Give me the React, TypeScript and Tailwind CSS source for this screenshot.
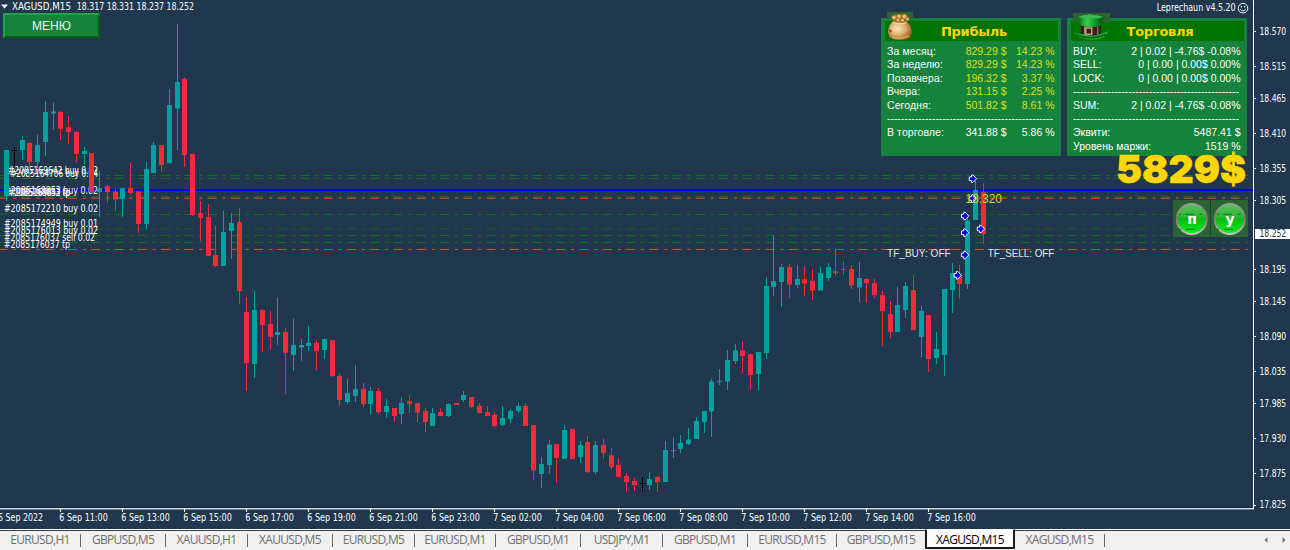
import React from "react";

type Kind = "u" | "d" | "n";
// kind, high, body top, body bottom, low
type Candle = [Kind, number, number, number, number];

const candles: Candle[] = [
  ["u", 150, 150, 196, 201], ["n", 147, 150, 151, 167], ["u", 136.5, 140, 150, 160], ["d", 142, 143, 162, 178],
  ["u", 134.5, 145, 162, 168], ["u", 101, 112, 142, 156], ["u", 102.5, 111.5, 113.5, 130], ["d", 111, 112, 129, 140],
  ["d", 116, 127, 132, 144], ["d", 131, 132, 154, 162], ["u", 147, 151, 154, 165], ["d", 153, 153, 192, 193],
  ["u", 171, 188, 192, 217], ["d", 185, 186, 192, 203], ["d", 189, 191.5, 199.5, 211], ["u", 188, 188, 199, 217],
  ["d", 163, 188, 193, 195], ["d", 191.5, 191.5, 224, 233], ["u", 162, 169, 224, 229], ["u", 142, 145, 173, 173],
  ["d", 145, 145, 165, 172], ["u", 89, 105, 163, 164], ["u", 24, 82, 108.5, 150], ["d", 77, 79, 155, 167],
  ["d", 154, 154, 215, 216], ["d", 201, 213, 218, 241], ["d", 204, 217, 256, 256], ["d", 226, 255, 266, 267],
  ["u", 211, 232, 266, 266], ["u", 213, 223, 231, 259], ["d", 208, 222, 291, 304], ["d", 297, 312, 363, 391],
  ["u", 291, 310, 364, 378], ["d", 309, 310, 325, 352], ["d", 311, 324, 337, 350], ["u", 298, 332, 335, 345],
  ["d", 328, 332, 353, 394], ["u", 318.5, 345, 355, 371], ["u", 339, 345, 347.5, 361], ["u", 326, 343, 346, 351],
  ["d", 340, 343, 351, 370], ["u", 339, 339, 350, 359], ["d", 340, 340, 376, 377], ["d", 374, 376, 400, 406],
  ["u", 379, 393, 402, 404], ["u", 365, 389, 396, 402], ["d", 383, 389, 404, 407], ["u", 387, 391, 404, 414],
  ["d", 388, 391, 412, 414], ["u", 399, 406, 412, 418], ["d", 408, 408, 416, 422], ["u", 397, 403, 414, 424],
  ["d", 395, 401, 404, 413], ["d", 403, 403, 412.5, 422], ["d", 408, 411, 422, 432], ["u", 408, 413, 426, 426],
  ["d", 408.5, 412, 416, 416], ["u", 403, 404, 416, 417], ["d", 403, 403, 405, 405], ["u", 391, 395, 400, 402],
  ["d", 397, 397, 407, 408], ["d", 403, 406, 413, 414], ["d", 406, 412, 416, 416], ["d", 412, 415, 426, 427],
  ["u", 406, 418, 425, 426], ["u", 409, 411, 419, 423], ["u", 403, 406, 411, 413], ["d", 403, 406, 426, 426],
  ["d", 425, 425, 470.5, 480], ["u", 457, 464, 474, 488], ["u", 439.5, 444.5, 465, 474], ["d", 444, 444, 458, 483],
  ["u", 425, 430, 459, 459], ["d", 429, 429, 459, 459], ["u", 441, 445, 457, 463], ["d", 436, 442, 472, 473],
  ["u", 441, 445, 472, 474], ["d", 438.5, 445, 453, 459], ["d", 448, 455, 467, 469], ["d", 458, 465, 477, 477],
  ["d", 473, 476, 482, 492], ["d", 478, 481, 485, 491], ["n", 477, 483, 484, 492], ["u", 472, 479, 485, 490],
  ["d", 476, 477, 482, 492], ["u", 441, 450, 482, 482], ["u", 437.5, 450, 451, 458], ["u", 435, 443, 449, 453],
  ["u", 428, 439.5, 444, 445], ["u", 417, 421, 439, 439], ["u", 411, 411, 422, 433], ["u", 378.5, 381.5, 411.5, 437],
  ["u", 369, 381, 382, 385], ["u", 350, 360, 381.5, 390], ["u", 344, 350.5, 361, 364], ["d", 341, 350.5, 356, 373],
  ["d", 354, 354, 375, 390], ["u", 352, 352, 374, 390], ["u", 277, 286, 353, 359], ["u", 235, 281, 287, 296],
  ["u", 264, 267, 282, 307], ["d", 264, 267, 284.5, 298], ["u", 265, 279, 285, 288], ["d", 266, 279, 283.5, 296],
  ["d", 269, 281, 290.5, 300], ["u", 267, 273, 290.5, 290.5], ["u", 263, 267, 278, 281], ["d", 249, 271, 273, 276],
  ["d", 261, 269, 270, 275], ["d", 265, 269, 285.5, 289], ["u", 262, 278, 287.5, 302], ["d", 278, 279, 283, 303],
  ["d", 279, 283, 295, 298], ["d", 291, 295, 311, 346], ["d", 301, 314, 332, 338.5], ["u", 287, 305, 332, 332],
  ["u", 282, 286, 310, 318], ["d", 275, 290, 330, 330], ["u", 306, 311, 337, 357], ["d", 315, 315, 359, 372],
  ["u", 332, 349, 358, 364], ["u", 289, 289, 355, 376], ["u", 263, 273, 290, 313], ["d", 265, 276, 284, 299],
  ["u", 218, 220.5, 284, 289], ["u", 180, 190, 220, 220], ["d", 183, 192, 234, 244],
];

const fills: Record<Kind, string> = { u: "#02a09f", d: "#f12c3a", n: "#000000" };

const levels: [number, string][] = [
  [175.5, "#087a0c"], [178.5, "#087a0c"], [196.5, "#12661c"], [198.3, "#b9451f"], [214.5, "#087a0c"],
  [229, "#12661c"], [235.5, "#087a0c"], [242.5, "#087a0c"], [249.5, "#e04c12"],
];

const orders: [number, number, string, number][] = [
  [8, 174, "#2085169642 buy 0.02", 90],
  [10, 176.5, "#2085164706 buy 0.04", 88],
  [4, 193.7, "#2085168853 buy 0.02", 94],
  [10, 195.7, "#2085169842 tp", 60],
  [8, 195.7, "#2085168853 tp", 62],
  [4, 212.2, "#2085172210 buy 0.02", 94],
  [4, 226.5, "#2085174949 buy 0.01", 94],
  [4, 233.6, "#2085176013 buy 0.02", 94],
  [4, 240.5, "#2085176037 sell 0.02", 91],
  [4, 247.5, "#2085176037 tp", 66],
];

const prices: [number, string][] = [
  [31.5, "18.570"], [66.5, "18.515"], [98.5, "18.465"], [133.5, "18.410"], [168.5, "18.355"], [200.5, "18.305"],
  [269.5, "18.195"], [301.5, "18.145"], [336.5, "18.090"], [371.5, "18.035"], [403.5, "17.985"], [438.5, "17.930"],
  [473.5, "17.875"], [505, "17.825"],
];

const times = [
  "6 Sep 2022", "6 Sep 11:00", "6 Sep 13:00", "6 Sep 15:00", "6 Sep 17:00", "6 Sep 19:00", "6 Sep 21:00", "6 Sep 23:00",
  "7 Sep 02:00", "7 Sep 04:00", "7 Sep 06:00", "7 Sep 08:00", "7 Sep 10:00", "7 Sep 12:00", "7 Sep 14:00", "7 Sep 16:00",
];

const marks: [number, number][] = [
  [972.5, 178.7], [972.5, 198.5], [964.7, 216], [964.7, 232.7], [964.7, 255], [980.5, 229], [957.3, 275.3],
];

const tahoma = "font-['DejaVu_Sans_Condensed','DejaVu_Sans',sans-serif] [font-stretch:condensed]";
const arial = "font-['Liberation_Sans',Arial,sans-serif]";

function Label({ x, y, w, children, fill = "#ffffff", size = 9.6 }: { x: number; y: number; w: number; children: string; fill?: string; size?: number }) {
  return (
    <text x={x} y={y} fontSize={size} textLength={w} lengthAdjust="spacingAndGlyphs" fill={fill} xmlSpace="preserve">
      {children}
    </text>
  );
}

function Chart() {
  return (
    <svg width="1290" height="529" viewBox="0 0 1290 529" className={`block ${tahoma}`}>
      {levels.map(([y, c]) => (
        <line key={y} x1="-1.75" x2="1248" y1={y} y2={y} stroke={c} strokeWidth={c === "#b9451f" ? 1.6 : 1.1} strokeDasharray="9 6 3 5.25" />
      ))}
      <rect x="0" y="189" width="1253" height="2" fill="#0000ff" />
      {orders.map(([x, y, s, w], i) => (
        <Label key={i} x={x} y={y} w={w}>{s}</Label>
      ))}
      {candles.map(([k, h, t, b, l], i) => {
        const x = 6.5 + i * 7.75;
        const left = Math.floor(x) - 2;
        return (
          <g key={i} fill={fills[k]}>
            <rect x={Math.floor(x)} y={h} width="1" height={Math.max(l - h, 1)} />
            <rect x={left} y={t} width="5" height={Math.max(b - t, 1)} />
          </g>
        );
      })}
      {marks.map(([x, y], i) => (
        <path
          key={i}
          transform={`translate(${x} ${y})`}
          d="M-3.2 -1.8H-1V-3.7H0.6L4 0L0.6 3.7H-1V1.8H-3.2Z"
          fill="#0000f5"
          stroke="#f4f6ff"
          strokeWidth="1"
        />
      ))}
      <g className={arial}>
        <Label x={965.5} y={202.5} w={36.5} size={12.5} fill="#ded61c">18.320</Label>
        <Label x={887} y={257.4} w={63.7} size={10.8} fill="#e4e4e4">TF_BUY: OFF</Label>
        <Label x={987.7} y={257.4} w={66.7} size={10.8} fill="#e4e4e4">TF_SELL: OFF</Label>
      </g>
      <path d="M1 4.5H8L4.5 8.5Z" fill="#ffffff" />
      <Label x={12} y={9.8} w={59}>XAGUSD,M15</Label>
      <Label x={76.7} y={9.8} w={117.3}>18.317 18.331 18.237 18.252</Label>
      <Label x={1156.7} y={11} w={79}>Leprechaun v4.5.20</Label>
      <g fill="none" stroke="#eef2f5" strokeWidth="1">
        <circle cx="1243" cy="8.2" r="4.8" />
        <path d="M1240.4 9.3Q1243 12.6 1245.6 9.3M1241.3 5.8V7.6M1244.7 5.8V7.6" />
      </g>
      <rect x="0" y="507" width="1253" height="1" fill="#12273d" />
      <rect x="0" y="508" width="1254" height="1" fill="#dfe4e8" />
      <rect x="0" y="509" width="1254" height="1" fill="#6b7b8b" />
      <rect x="1253" y="0" width="1" height="509" fill="#ffffff" />
      {prices.map(([y, s]) => (
        <g key={s}>
          <rect x="1254" y={Math.floor(y)} width="2" height="1" fill="#ffffff" />
          <Label x={1259.5} y={y + 3.4} w={26.7}>{s}</Label>
        </g>
      ))}
      <rect x="1255" y="229" width="35" height="10" fill="#ffffff" />
      <Label x={1259.5} y={237.4} w={26.7} fill="#20374d">18.252</Label>
      {times.map((s, i) => (
        <g key={s}>
          <rect x={60 + (i - 1) * 62} y="509" width="1" height="3" fill="#ffffff" />
          <Label x={i === 0 ? -2 : 59.3 + (i - 1) * 62} y={521} w={i === 0 ? 45 : 48.5}>{s}</Label>
        </g>
      ))}
    </svg>
  );
}

function GoldPot() {
  return (
    <svg width="26" height="30" viewBox="0 0 26 30" className="block">
      <defs>
        <radialGradient id="pot" cx="0.4" cy="0.4" r="0.65">
          <stop offset="0" stopColor="#ffe9bd" />
          <stop offset="0.5" stopColor="#dfb06c" />
          <stop offset="1" stopColor="#8c5423" />
        </radialGradient>
      </defs>
      <rect width="26" height="7" fill="#2b6430" />
      <path d="M6 9C1 14 0 20 2.5 25C4.5 29 21 29.5 23.5 25C26.5 19 24 13 19 9Z" fill="url(#pot)" />
      <path d="M4 5L8 2L12 3L16 1.5L21 4L22 8L18 11L7 10Z" fill="#a4702a" />
      <g fill="#e8bd62" stroke="#744a18" strokeWidth="0.6">
        <circle cx="7" cy="5.5" r="2.4" />
        <circle cx="12" cy="4.5" r="2.5" />
        <circle cx="17.5" cy="4.5" r="2.6" />
        <circle cx="20.5" cy="7" r="1.9" />
        <circle cx="11" cy="8" r="2" />
        <circle cx="15.5" cy="8.2" r="2" />
      </g>
      <path d="M6 10.5Q12.5 13 19.5 10.5" fill="none" stroke="#fbe0a0" strokeWidth="1.2" />
      <path d="M2 17L5 19L3 21Z" fill="#8c2718" />
      <path d="M5 25Q13 28 22 24" fill="none" stroke="#f0c37c" strokeWidth="1" />
    </svg>
  );
}

function Hat() {
  return (
    <svg width="37" height="28" viewBox="0 0 37 28" className="block">
      <defs>
        <linearGradient id="hat" x1="0" x2="1" y1="0" y2="0">
          <stop offset="0" stopColor="#0b6d1d" />
          <stop offset="0.35" stopColor="#35d34a" />
          <stop offset="0.7" stopColor="#128c27" />
          <stop offset="1" stopColor="#064b12" />
        </linearGradient>
      </defs>
      <rect width="37" height="9" fill="#2b6430" />
      <path d="M0.5 20Q8 21 18 22Q28 22 35 18Q34 25 23 26.5Q8 28 0.5 20Z" fill="#21a936" />
      <path d="M3 22Q18 28 33 21.5" fill="none" stroke="#0a5c18" strokeWidth="1.4" />
      <path d="M5 4Q16 -1 31 4Q27 12 28 21Q18 25 8 21Q9 11 5 4Z" fill="url(#hat)" />
      <path d="M5 4Q16 -1 31 4Q18 7 5 4Z" fill="#40b84d" />
      <path d="M7.8 12.5Q18 15.5 28 12.5V20.5Q18 24.5 8 20.5Z" fill="#3d1e1a" />
      <path d="M11.6 13.5V22M24.8 13.5V21.5" stroke="#a79c95" strokeWidth="0.9" />
      <rect x="12.8" y="15" width="6" height="6.2" fill="none" stroke="#d9c39a" strokeWidth="1.2" />
    </svg>
  );
}

function RoundButton({ letter }: { letter: string }) {
  return (
    <div className="relative flex size-[37px] items-center justify-center bg-[#2b6430]">
      <svg width="37" height="37" viewBox="0 0 37 37" className="absolute inset-0">
        <defs>
          <linearGradient id="ring" x1="0" x2="0" y1="0" y2="1">
            <stop offset="0" stopColor="#9c9c9c" />
            <stop offset="0.5" stopColor="#777777" />
            <stop offset="1" stopColor="#c5c5c5" />
          </linearGradient>
          <linearGradient id="glass" x1="0" x2="0" y1="0" y2="1">
            <stop offset="0" stopColor="#58c45c" />
            <stop offset="0.42" stopColor="#2cb535" />
            <stop offset="0.5" stopColor="#06b911" />
            <stop offset="1" stopColor="#10f31f" />
          </linearGradient>
        </defs>
        <circle cx="18.8" cy="19" r="15" fill="url(#glass)" stroke="url(#ring)" strokeWidth="2" />
        <path d="M6 14.3H8M12 14.3H21M26.5 14.3H29.5M6 29.3H8M13 29.3H22" stroke="#087a0c" strokeWidth="1" />
      </svg>
      <span className="relative pl-px font-['DejaVu_Sans',sans-serif] text-[14px] leading-none font-bold text-white">{letter}</span>
    </div>
  );
}

function Panel({ title, icon, children }: { title: string; icon: React.ReactNode; children: React.ReactNode }) {
  return (
    <section className="relative h-[138px] w-[180px] bg-[#15833c] pt-[3px] pl-[4px]">
      <h2 className="flex h-[20px] w-[173px] items-center justify-center bg-[#007400] pl-[5px] font-['DejaVu_Sans',sans-serif] text-[13px] leading-none font-bold tracking-[-0.25px] text-[#ffd700]">
        {title}
      </h2>
      {icon}
      <div className="flex flex-col pt-[3.5px] pl-[2px] text-[10.5px] leading-[13.6px] text-white">{children}</div>
    </section>
  );
}

function Rule() {
  return (
    <div className="h-[13.6px] w-[167px] overflow-hidden tracking-[-0.04px] whitespace-nowrap">{"-".repeat(48)}</div>
  );
}

function ProfitRow({ name, sum, pct, plain }: { name: string; sum: string; pct: string; plain?: boolean }) {
  const tone = plain ? "text-white" : "text-[#dfe010]";
  return (
    <div className="flex h-[13.6px] w-[167.5px] whitespace-nowrap">
      <span className="flex-1 tracking-[0.1px]">{name}</span>
      <span className={`text-right ${tone}`}>{sum}</span>
      <span className={`w-[48px] text-right ${tone}`}>{pct}</span>
    </div>
  );
}

function TradeRow({ name, value }: { name: string; value: string }) {
  return (
    <div className="flex h-[13.6px] w-[167.5px] justify-between whitespace-nowrap">
      <span>{name}</span>
      <span>{value}</span>
    </div>
  );
}

const tabs: { name: string; cell: string; active?: boolean }[] = [
  { name: "EURUSD,H1", cell: "w-[81px]" },
  { name: "GBPUSD,M5", cell: "w-[85px]" },
  { name: "XAUUSD,H1", cell: "w-[82px]" },
  { name: "XAUUSD,M5", cell: "w-[85px]" },
  { name: "EURUSD,M5", cell: "w-[82px]" },
  { name: "EURUSD,M1", cell: "w-[81px]" },
  { name: "GBPUSD,M1", cell: "w-[85px]" },
  { name: "USDJPY,M1", cell: "w-[82px]" },
  { name: "GBPUSD,M1", cell: "w-[85px]" },
  { name: "EURUSD,M15", cell: "w-[89px]" },
  { name: "GBPUSD,M15", cell: "w-[88px]" },
  { name: "XAGUSD,M15", cell: "w-[90px]", active: true },
  { name: "XAGUSD,M15", cell: "w-[90px]" },
];

function Tabs() {
  return (
    <nav className="flex h-[21px] items-start bg-[#f0f0f0] font-['Open_Sans',sans-serif] text-[12px] leading-none tracking-[-0.7px] text-[#6f6f6f] shadow-[inset_0_1px_0_#fff,inset_0_2px_0_#3b3b40]">
      {tabs.map((t, i) =>
        t.active ? (
          <div key={i} className={`${t.cell} flex h-[20px] shrink-0 items-center justify-center border-x-2 border-t border-b-2 border-[#1a1a1a] border-t-white bg-white pt-[3px] text-black`}>
            {t.name}
          </div>
        ) : (
          <div key={i} className={`${t.cell} flex h-[20px] shrink-0 items-center pt-[2px]`}>
            <span className="flex-1 text-center">{t.name}</span>
            {i !== 10 && <span className="h-[13px] w-px bg-[#6a6a6a]" />}
          </div>
        ),
      )}
      <div className="flex h-[20px] flex-1 items-center justify-end gap-[14px] pt-px pr-[4px]">
        <svg width="4" height="6" viewBox="0 0 4 6"><path d="M3.5 0V6L0.3 3Z" fill="#777" /></svg>
        <svg width="4" height="6" viewBox="0 0 4 6"><path d="M0.5 0V6L3.7 3Z" fill="#777" /></svg>
      </div>
    </nav>
  );
}

export default function App() {
  return (
    <main className="relative flex h-[550px] w-[1290px] flex-col overflow-hidden bg-[#20374d]">
      <Chart />
      <Tabs />
      <button className={`absolute top-[13px] left-[3px] flex h-[25px] w-[97px] items-center justify-center border-2 border-t-[#27a24c] border-r-[#075f12] border-b-[#075f12] border-l-[#27a24c] bg-[#15833a] text-[12px] leading-none text-[#eef5ee] ${arial}`}>
        МЕНЮ
      </button>
      <div className={`absolute top-[18px] left-[881px] flex gap-[6px] ${arial}`}>
        <Panel title="Прибыль" icon={<div className="absolute top-[-6px] left-[6px]"><GoldPot /></div>}>
          <ProfitRow name="За месяц:" sum="829.29 $" pct="14.23 %" />
          <ProfitRow name="За неделю:" sum="829.29 $" pct="14.23 %" />
          <ProfitRow name="Позавчера:" sum="196.32 $" pct="3.37 %" />
          <ProfitRow name="Вчера:" sum="131.15 $" pct="2.25 %" />
          <ProfitRow name="Сегодня:" sum="501.82 $" pct="8.61 %" />
          <Rule />
          <ProfitRow name="В торговле:" sum="341.88 $" pct="5.86 %" plain />
        </Panel>
        <Panel title="Торговля" icon={<div className="absolute top-[-5px] left-[6px]"><Hat /></div>}>
          <TradeRow name="BUY:" value="2 | 0.02 | -4.76$ -0.08%" />
          <TradeRow name="SELL:" value="0 | 0.00 | 0.00$ 0.00%" />
          <TradeRow name="LOCK:" value="0 | 0.00 | 0.00$ 0.00%" />
          <Rule />
          <TradeRow name="SUM:" value="2 | 0.02 | -4.76$ -0.08%" />
          <Rule />
          <TradeRow name="Эквити:" value="5487.41 $" />
          <TradeRow name="Уровень маржи:" value="1519 %" />
        </Panel>
      </div>
      <div className="absolute top-[148.5px] right-[44px] font-['Inter','DejaVu_Sans',sans-serif] text-[39px] leading-[39px] font-black text-[#ffd700] [-webkit-text-stroke:0.5px_#ffd700]">5829$</div>
      <div className="absolute top-[200px] left-[1173px] flex gap-px">
        <RoundButton letter="п" />
        <RoundButton letter="у" />
      </div>
    </main>
  );
}
